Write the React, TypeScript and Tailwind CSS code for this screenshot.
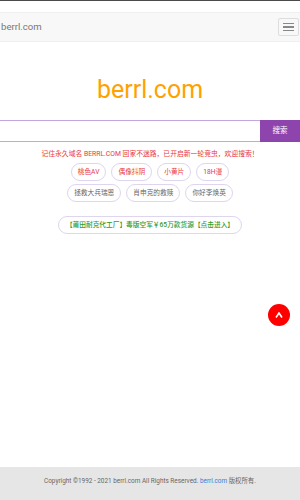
import React from "react";

const font = { fontFamily: 'Roboto, "Noto Sans CJK SC", sans-serif' };

function Pill({ text, color }: { text: string; color: string }) {
  return (
    <div
      className={`h-[18px] px-[6px] flex items-center rounded-full border border-[#ddd6ee] text-[6.7px] leading-none ${color}`}
    >
      {text}
    </div>
  );
}

export default function App() {
  return (
    <div
      className="relative w-[300px] h-[500px] bg-white flex flex-col overflow-hidden"
      style={font}
    >
      <div className="h-px bg-[#4a4a4a]" />
      <div className="h-[11px]" />
      <div className="h-[30px] bg-[#f8f8f8] border-y border-[#efefef] flex items-center justify-between pl-px pr-[1px]">
        <span className="text-[9.6px] text-[#777] leading-none">berrl.com</span>
        <div className="w-[21px] h-[18px] border border-[#ddd] rounded-[2px] flex flex-col items-center justify-center gap-[2px]">
          <div className="w-[11px] h-[1.5px] bg-[#888]" />
          <div className="w-[11px] h-[1.5px] bg-[#888]" />
          <div className="w-[11px] h-[1.5px] bg-[#888]" />
        </div>
      </div>

      <div className="mt-[33px] h-[30px] flex items-center justify-center text-[25px] leading-[30px] text-[#ffa200]">
        berrl.com
      </div>

      <div className="mt-[15px] h-[22px] flex">
        <div className="flex-1 -ml-px border border-r-0 border-[#c2a6dd] bg-white" />
        <div className="w-[40px] bg-[#8e44ad] text-white text-[7.5px] flex items-center justify-center">
          搜索
        </div>
      </div>

      <div className="mt-[7px] h-[10px] flex items-center justify-center text-[6.8px] leading-none text-[#e8383d] whitespace-nowrap">
        记住永久域名 BERRL.COM 回家不迷路，已开启新一轮竞虫，欢迎搜索！
      </div>

      <div className="mt-[4px] flex flex-col items-center gap-[3px]">
        <div className="flex gap-[5px]">
          <Pill text="桃色AV" color="text-[#e8383d]" />
          <Pill text="偶像抖阴" color="text-[#e8383d]" />
          <Pill text="小黄片" color="text-[#e8383d]" />
          <Pill text="18H漫" color="text-[#e8383d]" />
        </div>
        <div className="flex gap-[5px]">
          <Pill text="拯救大兵瑞恩" color="text-[#666]" />
          <Pill text="肖申克的救赎" color="text-[#666]" />
          <Pill text="你好李焕英" color="text-[#666]" />
        </div>
      </div>

      <div className="mt-[14px] flex justify-center">
        <div className="h-[18px] px-[7px] flex items-center rounded-full border border-[#ddd6ee] text-[6.7px] leading-none font-medium text-[#2f9a2f] whitespace-nowrap">
          【莆田耐克代工厂】毒版空军￥65万款货源【点击进入】
        </div>
      </div>

      <div className="flex-1" />

      <div className="h-[33px] bg-[#e6e6e6] flex items-start justify-center pt-[10px] text-[6.4px] leading-[9px] text-[#666] whitespace-nowrap">
        Copyright ©1992 - 2021 berrl.com All Rights Reserved.&nbsp;
        <span className="text-[#3a7bd5]">berrl.com</span>&nbsp;版权所有.
      </div>

      <div className="absolute left-[267.5px] top-[303.5px] w-[22px] h-[22px] rounded-full bg-[#f00] flex items-center justify-center">
        <svg width="8" height="6" viewBox="0 0 8 6">
          <path d="M1 5.5 L4 1 L7 5.5" fill="none" stroke="white" strokeWidth="1.6" />
        </svg>
      </div>
    </div>
  );
}
